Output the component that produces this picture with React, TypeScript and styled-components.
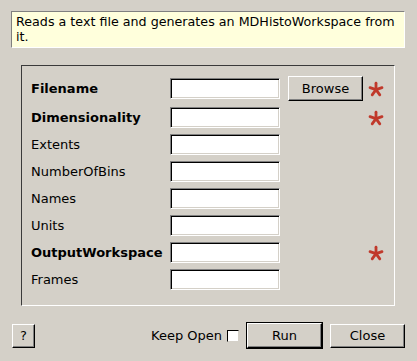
import React from "react";
import styled, { createGlobalStyle } from "styled-components";

const GlobalStyle = createGlobalStyle`
    html, body {
        margin: 0;
        padding: 0;
        background: #d4d0c8;
    }
    body {
        font-family: "DejaVu Sans", "Liberation Sans", sans-serif;
        font-size: 13px;
        color: #000000;
    }
`

const Dialog = styled.div`
    width: 417px;
    height: 361px;
    box-sizing: border-box;
    padding: 11px 12px 0 11px;
    display: flex;
    flex-direction: column;
    background: #d4d0c8;
`

const Description = styled.div`
    box-sizing: border-box;
    width: 394px;
    height: 37px;
    padding: 2px 0 0 4px;
    background: #ffffdc;
    border-top: 1px solid #808080;
    border-left: 1px solid #808080;
    border-right: 1px solid #ffffff;
    border-bottom: 1px solid #ffffff;
    font-size: 12.7px;
    line-height: 15px;
    white-space: nowrap;
    overflow: hidden;
`

const Frame = styled.div`
    box-sizing: border-box;
    margin: 17px 0 0 10px;
    width: 374px;
    height: 241px;
    padding: 10px 0 0 9px;
    border-top: 1px solid #3a3a3a;
    border-left: 1px solid #3a3a3a;
    border-right: 1px solid #ffffff;
    border-bottom: 1px solid #ffffff;
`

const PropertyGrid = styled.div`
    display: grid;
    grid-template-columns: 133px 110px 75px 16px;
    column-gap: 6px;
    row-gap: 6px;
    grid-auto-rows: 21px;
    grid-template-rows: 25px;
    align-items: center;
    & > :nth-child(4n + 3) { margin-left: 2px; }
    & > :nth-child(4n) { margin-left: 1px; }
`

const Label = styled.div<{ $bold?: boolean }>`
    font-weight: ${(p) => (p.$bold ? 700 : 400)};
    white-space: nowrap;
`

const TextInput = styled.input`
    box-sizing: border-box;
    width: 110px;
    height: 21px;
    margin: 0;
    padding: 0 3px;
    background: #ffffff;
    border-top: 1px solid #808080;
    border-left: 1px solid #808080;
    border-right: 1px solid #ffffff;
    border-bottom: 1px solid #ffffff;
    box-shadow: inset 1px 1px 0 #000000, inset -1px -1px 0 #d4d0c8;
    font: inherit;
    outline: none;
`

const PushButton = styled.button<{ $default?: boolean; $w: number; $h: number }>`
    box-sizing: border-box;
    width: ${(p) => p.$w}px;
    height: ${(p) => p.$h}px;
    margin: 0;
    padding: 0;
    background: #d4d0c8;
    font: inherit;
    color: #000000;
    border-top: 1px solid #ffffff;
    border-left: 1px solid #ffffff;
    border-right: 1px solid #000000;
    border-bottom: 1px solid #000000;
    box-shadow: inset -1px -1px 0 #808080;
    outline: ${(p) => (p.$default ? "1px solid #000000" : "none")};
    outline-offset: 0;
    display: flex;
    align-items: center;
    justify-content: center;
`

const Empty = styled.div``

const Footer = styled.div`
    margin-top: 17px;
    display: flex;
    align-items: center;
    padding-left: 1px;
`

const Spacer = styled.div`
    flex: 1;
`

const KeepOpen = styled.label`
    display: flex;
    align-items: center;
    gap: 5px;
    margin-right: 8px;
`

const CheckBox = styled.span`
    box-sizing: border-box;
    width: 12px;
    height: 12px;
    background: #ffffff;
    border-top: 1px solid #000000;
    border-left: 1px solid #000000;
    border-right: 1px solid #d4d0c8;
    border-bottom: 1px solid #d4d0c8;
    margin-top: 1px;
`

function Star() {
    return (
        <svg width="16" height="16" viewBox="0 0 16 16">
            <g stroke="#c0392b" strokeWidth="2.8" strokeLinecap="round" fill="none">
                <line x1="8" y1="8.6" x2="8" y2="2.2" />
                <line x1="8" y1="8.6" x2="14" y2="6.6" />
                <line x1="8" y1="8.6" x2="2" y2="6.6" />
                <line x1="8" y1="8.6" x2="11.8" y2="13.8" />
                <line x1="8" y1="8.6" x2="4.2" y2="13.8" />
            </g>
        </svg>
    );
}

const properties = [
    { name: "Filename", bold: true, browse: true, required: true },
    { name: "Dimensionality", bold: true, required: true },
    { name: "Extents" },
    { name: "NumberOfBins" },
    { name: "Names" },
    { name: "Units" },
    { name: "OutputWorkspace", bold: true, required: true },
    { name: "Frames" },
];

export default function App() {
    return (
        <>
            <GlobalStyle />
            <Dialog>
                <Description>
                    Reads a text file and generates an MDHistoWorkspace from
                    <br />
                    it.
                </Description>
                <Frame>
                    <PropertyGrid>
                        {properties.map((p) => (
                            <React.Fragment key={p.name}>
                                <Label $bold={p.bold}>{p.name}</Label>
                                <TextInput />
                                {p.browse ? (
                                    <PushButton $w={75} $h={25}>Browse</PushButton>
                                ) : (
                                    <Empty />
                                )}
                                {p.required ? <Star /> : <Empty />}
                            </React.Fragment>
                        ))}
                    </PropertyGrid>
                </Frame>
                <Footer>
                    <PushButton $w={23} $h={24}>?</PushButton>
                    <Spacer />
                    <KeepOpen>
                        Keep Open
                        <CheckBox />
                    </KeepOpen>
                    <PushButton $default $w={75} $h={25}>Run</PushButton>
                    <PushButton $w={75} $h={24} style={{ marginLeft: 8 }}>Close</PushButton>
                </Footer>
            </Dialog>
        </>
    );
}
